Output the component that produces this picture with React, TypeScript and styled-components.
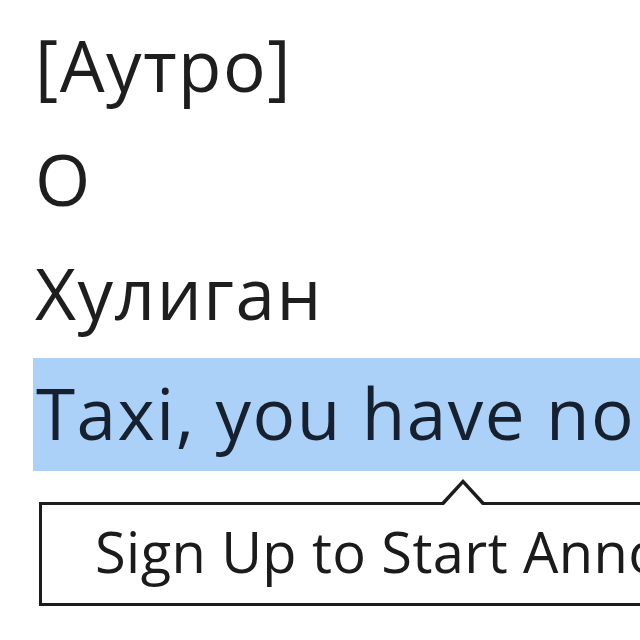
import React from "react";
import styled, { createGlobalStyle } from "styled-components";

const Global = createGlobalStyle`
  html, body {
    margin: 0;
    padding: 0;
    background: #ffffff;
  }
  body {
    width: 640px;
    height: 640px;
    overflow: hidden;
  }
`;

const Page = styled.div`
  width: 640px;
  height: 640px;
  overflow: hidden;
  padding-top: 8px;
  box-sizing: border-box;
`;

const Lyrics = styled.div`
  display: flex;
  flex-direction: column;
  font-family: "Open Sans", "Noto Sans", sans-serif;
  font-size: 71px;
  line-height: 114px;
  letter-spacing: 1.5px;
  color: #1e1e1e;
  white-space: nowrap;
`;

const Line = styled.div<{ $selected?: boolean }>`
  padding-left: ${(p) => (p.$selected ? "3px" : "35px")};
  margin-left: ${(p) => (p.$selected ? "33px" : "0")};
  margin-top: ${(p) => (p.$selected ? "8px" : "0")};
  background: ${(p) => (p.$selected ? "#abd1f9" : "transparent")};
  color: ${(p) => (p.$selected ? "#17202e" : "inherit")};
  height: ${(p) => (p.$selected ? "113px" : "114px")};
  line-height: ${(p) => (p.$selected ? "110px" : "114px")};
`;

const Tooltip = styled.div`
  position: relative;
  margin-left: 39px;
  margin-top: 31px;
  width: 700px;
  height: 104px;
  border: 3px solid #1c1c1c;
  box-sizing: border-box;
  background: #ffffff;
  font-family: "Open Sans", "Noto Sans", sans-serif;
  font-size: 56px;
  line-height: 92px;
  letter-spacing: 0.4px;
  color: #1b1b1b;
  padding-left: 53px;
  white-space: nowrap;

  &::before {
    content: "";
    position: absolute;
    left: 397px;
    top: -26px;
    width: 0;
    height: 0;
    border-left: 24px solid transparent;
    border-right: 24px solid transparent;
    border-bottom: 26px solid #1c1c1c;
  }
  &::after {
    content: "";
    position: absolute;
    left: 401px;
    top: -21px;
    width: 0;
    height: 0;
    border-left: 20px solid transparent;
    border-right: 20px solid transparent;
    border-bottom: 22px solid #ffffff;
  }
`;

export default function App() {
  return (
    <Page>
      <Global />
      <Lyrics>
        <Line>[Аутро]</Line>
        <Line>О</Line>
        <Line>Хулиган</Line>
        <Line $selected>Taxi, you have no idea</Line>
      </Lyrics>
      <Tooltip>Sign Up to Start Annotating</Tooltip>
    </Page>
  );
}
